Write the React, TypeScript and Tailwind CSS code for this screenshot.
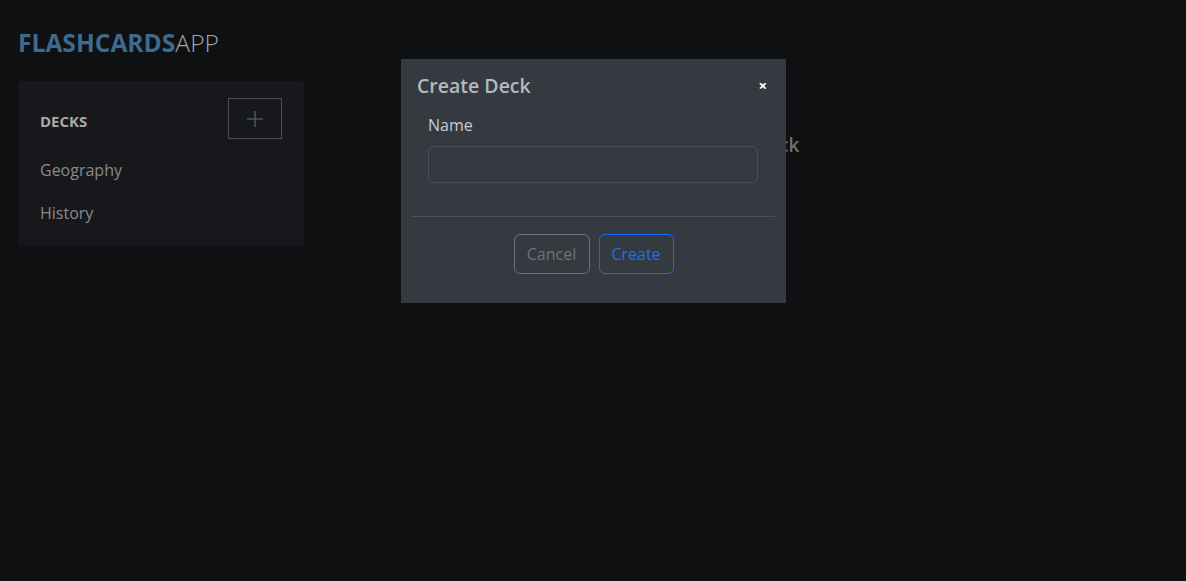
import { useState } from "react";

const decks = ["Geography", "History"];

export default function App() {
  const [name, setName] = useState("");

  return (
    <div
      className="relative min-h-[581px] w-full bg-[#0f1012]"
      style={{ fontFamily: '"Open Sans", "Noto Sans", sans-serif' }}
    >
      <div className="flex flex-col px-[18px] pt-[27px]">
        <h1 className="text-[24.6px] leading-[32px]">
          <span className="font-bold text-[#3d6a8e]">FLASHCARDS</span>
          <span className="font-light text-[#a3a3a3]">APP</span>
        </h1>

        <div className="mt-[22px] flex gap-[18px]">
          <aside className="w-[286px] rounded bg-[#17181b] pl-[22px] pr-[22px] pt-[17px] pb-[17px]">
            <div className="flex items-center justify-between">
              <span className="mt-[5px] text-[15px] font-bold text-[#a9a9a9]">DECKS</span>
              <button className="flex h-[41px] w-[54px] items-center justify-center border border-[#4b4d50] text-[#4d5358]">
                <svg width="18" height="18" viewBox="0 0 18 18" fill="none" stroke="currentColor" strokeWidth="1.6">
                  <path d="M9 1v16M1 9h16" />
                </svg>
              </button>
            </div>
            <ul className="mt-[15px] flex flex-col gap-[11px]">
              {decks.map((d) => (
                <li key={d} className="text-[16px] leading-[32px] text-[#8a8a8a]">
                  {d}
                </li>
              ))}
            </ul>
          </aside>

          <main className="flex flex-1 justify-center pt-[50px] pr-[10px]">
            <p className="text-[19px] font-semibold text-[#6f7174]">Select a deck</p>
          </main>
        </div>
      </div>

      {/* modal */}
      <div className="absolute left-[401px] top-[59px] w-[385px] bg-[#343a40] pb-[29px]">
        <div className="flex items-center justify-between pl-[16px] pr-[19px] pt-[12px]">
          <h2 className="text-[19.5px] font-semibold text-[#b3bac1]">Create Deck</h2>
          <button className="text-[15px] font-bold leading-none text-white">×</button>
        </div>
        <div className="px-[27px] pt-[13px]">
          <label className="block text-[16px] text-[#c5ccd3]">Name</label>
          <input
            value={name}
            onChange={(e) => setName(e.target.value)}
            className="mt-[9px] h-[37px] w-[330px] rounded-md border border-[#4a5057] bg-transparent px-3 text-[#ced4da] outline-none"
          />
        </div>
        <div className="mx-[11px] mt-[33px] border-t border-[#4a5057]" />
        <div className="mt-[17px] flex justify-center gap-[9px]">
          <button className="h-[40px] w-[76px] rounded-md border border-[#6c737a] text-[16px] text-[#6c737a]">
            Cancel
          </button>
          <button className="h-[40px] w-[75px] rounded-md border border-[#0d6efd] text-[16px] text-[#1f6cf5]">
            Create
          </button>
        </div>
      </div>
    </div>
  );
}
